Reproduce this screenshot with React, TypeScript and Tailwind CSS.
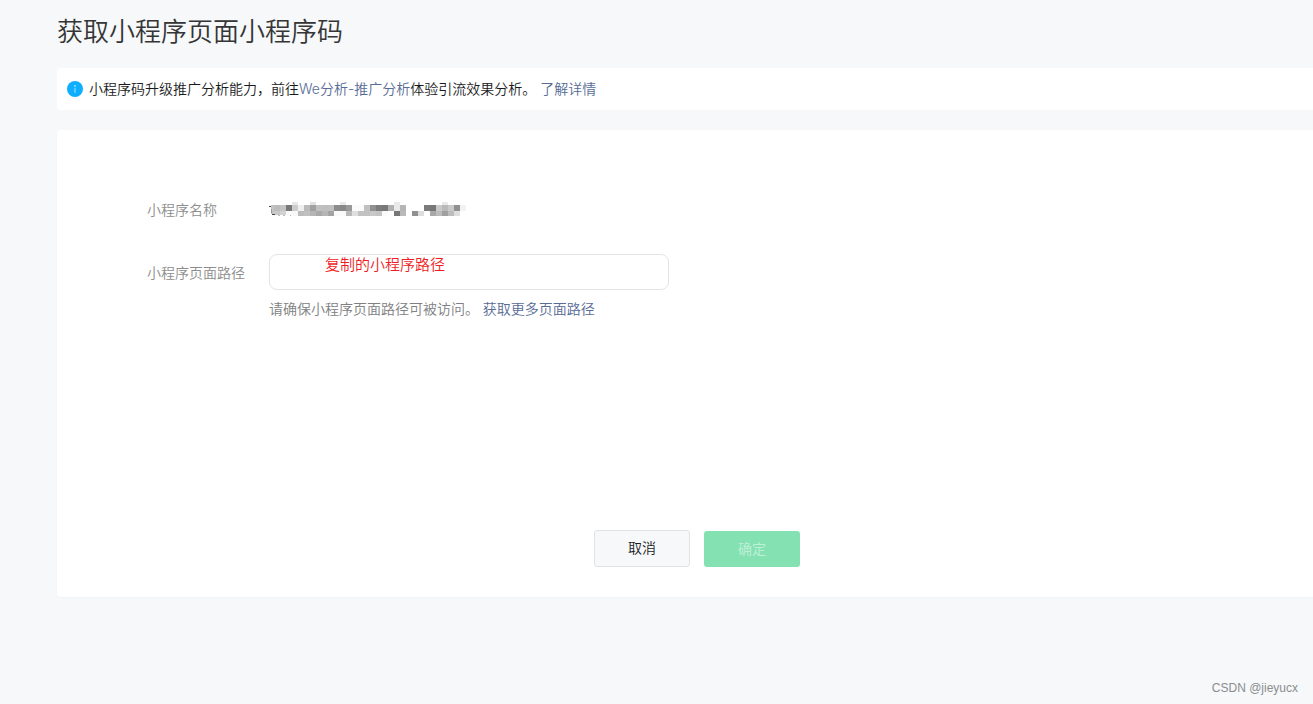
import React from "react";

type Cell = [x: number, y: number, fill: string];

const CELLS: Cell[] = [
  // top row
  [24, -1, "#e6e6e6"], [42, -1, "#e0e0e0"], [72, -1, "#e9e9e9"], [126, -1, "#e9e9e9"], [174, -1, "#e9e9e9"],
  // middle row
  [6, 0, "#bcbcbc"], [12, 0, "#c3c3c3"], [18, 0, "#777777"], [24, 0, "#cccccc"], [30, 0, "#eeeeee"],
  [36, 0, "#bbbbbb"], [42, 0, "#a0a0a0"], [48, 0, "#c0c0c0"], [54, 0, "#bebebe"], [60, 0, "#c0c0c0"],
  [66, 0, "#8c8c8c"], [72, 0, "#888888"], [78, 0, "#999999"], [84, 0, "#fafafa"], [90, 0, "#fafafa"],
  [96, 0, "#c0c0c0"], [102, 0, "#909090"], [108, 0, "#7b7b7b"], [114, 0, "#777777"], [120, 0, "#b0b0b0"],
  [126, 0, "#e9e9e9"], [132, 0, "#b5b5b5"], [156, 0, "#7b7b7b"], [162, 0, "#777777"], [168, 0, "#c9c9c9"],
  [174, 0, "#b9b9b9"], [180, 0, "#c9c9c9"], [186, 0, "#909090"], [192, 0, "#f2f2f2"],
  // bottom row
  [18, 1, "#fafafa"], [24, 1, "#f8f8f8"], [30, 1, "#bbbbbb"],
  [36, 1, "#c0c0c0"], [42, 1, "#b5b5b5"], [48, 1, "#a8a8a8"], [54, 1, "#b5b5b5"], [60, 1, "#a3a3a3"],
  [66, 1, "#fafafa"], [72, 1, "#fafafa"], [78, 1, "#b8b8b8"], [84, 1, "#dedede"], [90, 1, "#c2c2c2"],
  [96, 1, "#c2c2c2"], [102, 1, "#c9c9c9"], [108, 1, "#c4c4c4"], [114, 1, "#fafafa"], [126, 1, "#777777"],
  [132, 1, "#b9b9b9"], [144, 1, "#909090"], [150, 1, "#dddddd"], [162, 1, "#a8a8a8"], [168, 1, "#bbbbbb"],
  [174, 1, "#a0a0a0"], [180, 1, "#bcbcbc"], [186, 1, "#dedede"],
];

function MaskedName() {
  return (
    <svg width="200" height="16" viewBox="1 0 200 16" shapeRendering="crispEdges" aria-hidden="true">
      <rect x="3" y="4" width="3" height="9" fill="#c4c4c4" />
      <rect x="6" y="10" width="6" height="4" fill="#c8c8c8" />
      <rect x="12" y="10" width="6" height="4" fill="#d2d2d2" />
      {CELLS.map(([x, row, fill]) => (
        <rect
          key={`${x}/${row}`}
          x={x}
          y={row < 0 ? 1 : row === 0 ? 4 : 10}
          width="6"
          height={row < 0 ? 3 : row === 0 ? 6 : 5}
          fill={fill}
        />
      ))}
      <path d="M1 5h2v1H1zM4 13h3v1H4z" fill="#444" />
      <path d="M3 8h1v4H3z" fill="#999" />
      <path d="M10 14h2v1h-2zM15 14h2v1h-2zM22 14h1v1h-1z" fill="#bbb" />
    </svg>
  );
}

function InfoIcon() {
  return (
    <svg width="16" height="16" viewBox="0 0 16 16" className="shrink-0" aria-hidden="true">
      <circle cx="8" cy="8" r="8" fill="#10aeff" />
      <circle cx="8" cy="4.9" r="0.8" fill="#fff" fillOpacity="0.8" />
      <path d="M8 6.8v5" stroke="#fff" strokeOpacity="0.65" strokeWidth="1" />
    </svg>
  );
}

export default function App() {
  return (
    <div className="flex min-h-screen flex-col overflow-hidden bg-[#f6f8fa] font-['Open_Sans','Noto_Sans_CJK_SC',sans-serif] text-sm font-[350] text-[#1a1b1c]">
      <main className="-mr-6 pl-[57px]">
        <h1 className="flex h-[68px] items-center pb-1 text-[26px] font-[350] text-[#353535]">
          获取小程序页面小程序码
        </h1>

        <div className="flex h-[42px] items-center gap-1.5 rounded-sm bg-white px-2.5">
          <InfoIcon />
          <p className="font-['Inter','Noto_Sans_CJK_SC',sans-serif]">
            小程序码升级推广分析能力，前往
            <a href="#analysis" className="text-[#576b95]">We分析-推广分析</a>
            体验引流效果分析。{" "}
            <a href="#details" className="text-[#576b95]">了解详情</a>
          </p>
        </div>

        <form
          className="mt-5 rounded-sm bg-white pt-[68px] pb-[30px] shadow-[0_1px_2px_rgba(0,0,0,0.03)]"
          onSubmit={(e) => e.preventDefault()}
        >
          <div className="grid grid-cols-[98px_1fr] gap-x-6 pl-[90px]">
            <span className="leading-6 text-[#8d8d8d]">小程序名称</span>
            <div className="pt-[3px]">
              <MaskedName />
            </div>

            <label htmlFor="path" className="mt-8 leading-[38px] text-[#8d8d8d]">
              小程序页面路径
            </label>
            <div className="mt-8">
              <input
                id="path"
                type="text"
                defaultValue="复制的小程序路径"
                className="block h-9 w-full max-w-[400px] rounded-lg border border-[#e4e4e6] bg-white pb-[18px] pl-[55px] text-[15px] leading-4 text-[#ee1c24] outline-none"
              />
              <p className="mt-[7px] leading-6 text-[#7e8081]">
                请确保小程序页面路径可被访问。{" "}
                <a href="#paths" className="text-[#576b95]">获取更多页面路径</a>
              </p>
            </div>
          </div>

          <div className="mt-[209px] flex items-end justify-center gap-3.5">
            <button type="button" className="h-[37px] w-24 rounded-[3px] border border-[#e0e2e4] bg-[#f6f8fa] pb-0.5">
              取消
            </button>
            <button type="submit" disabled className="h-9 w-24 rounded-[3px] bg-[#83e1b2] text-[#c1f0d8]">
              确定
            </button>
          </div>
        </form>
      </main>

      <footer className="mt-auto pr-[15px] pb-2 text-right font-['Liberation_Sans',sans-serif] text-xs leading-4 text-[#8b8d8f]">
        CSDN @jieyucx
      </footer>
    </div>
  );
}
